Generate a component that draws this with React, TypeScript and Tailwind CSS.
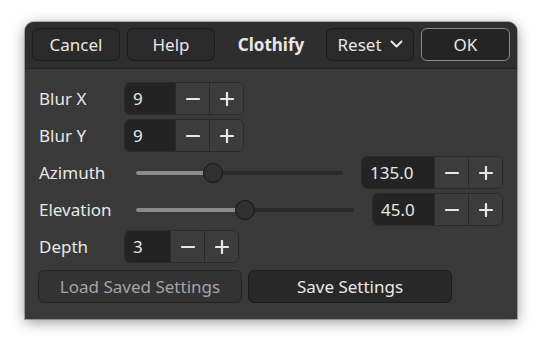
import type { ReactNode } from "react";

const font = { fontFamily: '"Noto Sans", "Open Sans", sans-serif' };

function Minus() {
  return (
    <svg width="14" height="14" viewBox="0 0 14 14">
      <path d="M1 7h12" stroke="#e6e6e6" strokeWidth="2.2" strokeLinecap="round" />
    </svg>
  );
}

function Plus() {
  return (
    <svg width="14" height="14" viewBox="0 0 14 14">
      <path d="M1 7h12M7 1v12" stroke="#e6e6e6" strokeWidth="2.2" strokeLinecap="round" />
    </svg>
  );
}

function SpinButton({
  value,
  textWidth,
}: {
  value: string;
  textWidth: string;
}) {
  return (
    <div className="flex h-[33px] overflow-hidden rounded-[6px] border border-[#2a2a2a]">
      <div
        className={`flex items-center bg-[#232323] pl-[8px] pt-[1px] text-[17px] text-[#e8e8e8] ${textWidth}`}
      >
        {value}
      </div>
      <div className="flex w-[34px] items-center justify-center border-l border-[#2a2a2a] bg-[#3c3c3c]">
        <Minus />
      </div>
      <div className="flex w-[34px] items-center justify-center border-l border-[#2a2a2a] bg-[#3c3c3c]">
        <Plus />
      </div>
    </div>
  );
}

function Slider({ pct }: { pct: number }) {
  return (
    <div className="relative ml-[12px] mr-[18px] h-[20px] flex-1">
      <div className="absolute left-0 right-0 top-[8px] h-[4px] rounded-full bg-[#2a2a2a]" />
      <div
        className="absolute left-0 top-[8px] h-[4px] rounded-full bg-[#8c8c8c]"
        style={{ width: `${pct}%` }}
      />
      <div
        className="absolute top-0 h-[20px] w-[20px] -translate-x-1/2 rounded-full border border-[#161616] bg-[#303030]"
        style={{ left: `${pct}%` }}
      />
    </div>
  );
}

function Row({ label, children }: { label: string; children: ReactNode }) {
  return (
    <div className="flex h-[33px] items-center">
      <div className="w-[85px] text-[17px] text-[#e8e8e8]">{label}</div>
      {children}
    </div>
  );
}

function HeaderButton({
  children,
  wide,
  ok,
}: {
  children: ReactNode;
  wide?: boolean;
  ok?: boolean;
}) {
  return (
    <button
      type="button"
      className={`flex h-[33px] items-center justify-center gap-[8px] rounded-[6px] border text-[17px] text-[#e8e8e8] ${
        wide ? "w-[89px]" : "w-[88px]"
      } ${ok ? "border-[#8a8a8a] bg-[#242424]" : "border-[#1c1c1c] bg-[#2a2a2a]"}`}
    >
      {children}
    </button>
  );
}

export default function App() {
  return (
    <div className="h-[348px] w-[542px] bg-white pl-[25px] pt-[22px]" style={font}>
      <div className="flex h-[297px] w-[492px] flex-col overflow-hidden rounded-t-[9px] bg-[#393939] shadow-[0_3px_14px_rgba(0,0,0,0.42),0_0_0_1px_rgba(0,0,0,0.25)]">
        <div className="flex h-[47px] items-center border-b border-[#222] bg-[#2e2e2e] px-[7px] pb-[1px]">
          <div className="flex flex-1 gap-[7px]">
            <HeaderButton>Cancel</HeaderButton>
            <HeaderButton>Help</HeaderButton>
          </div>
          <div className="text-[17px] font-bold text-[#e8e8e8]">Clothify</div>
          <div className="flex flex-1 justify-end gap-[7px]">
            <HeaderButton>
              <span>Reset</span>
              <svg width="13" height="9" viewBox="0 0 13 9">
                <path
                  d="M1.5 1.5l5 5 5-5"
                  fill="none"
                  stroke="#e8e8e8"
                  strokeWidth="2"
                  strokeLinecap="round"
                  strokeLinejoin="round"
                />
              </svg>
            </HeaderButton>
            <HeaderButton wide ok>
              OK
            </HeaderButton>
          </div>
        </div>

        <div className="flex flex-1 flex-col pl-[14px] pr-[14px] pt-[13px]">
          <div className="flex flex-col gap-[4px]">
            <Row label="Blur X">
              <SpinButton value="9" textWidth="w-[50px]" />
            </Row>
            <Row label="Blur Y">
              <SpinButton value="9" textWidth="w-[50px]" />
            </Row>
            <Row label="Azimuth">
              <Slider pct={37} />
              <SpinButton value="135.0" textWidth="w-[72px]" />
            </Row>
            <Row label="Elevation">
              <Slider pct={50} />
              <SpinButton value="45.0" textWidth="w-[61px]" />
            </Row>
            <Row label="Depth">
              <SpinButton value="3" textWidth="w-[45px]" />
            </Row>
          </div>

          <div className="mt-[7px] flex gap-[6px]">
            <button
              type="button"
              className="-ml-[1px] h-[33px] w-[204px] rounded-[6px] border border-[#242424] bg-[#333333] text-[17px] text-[#a4a4a4]"
            >
              Load Saved Settings
            </button>
            <button
              type="button"
              className="h-[33px] w-[204px] rounded-[6px] border border-[#1c1c1c] bg-[#282828] text-[17px] text-[#e8e8e8]"
            >
              Save Settings
            </button>
          </div>
        </div>
      </div>
    </div>
  );
}
